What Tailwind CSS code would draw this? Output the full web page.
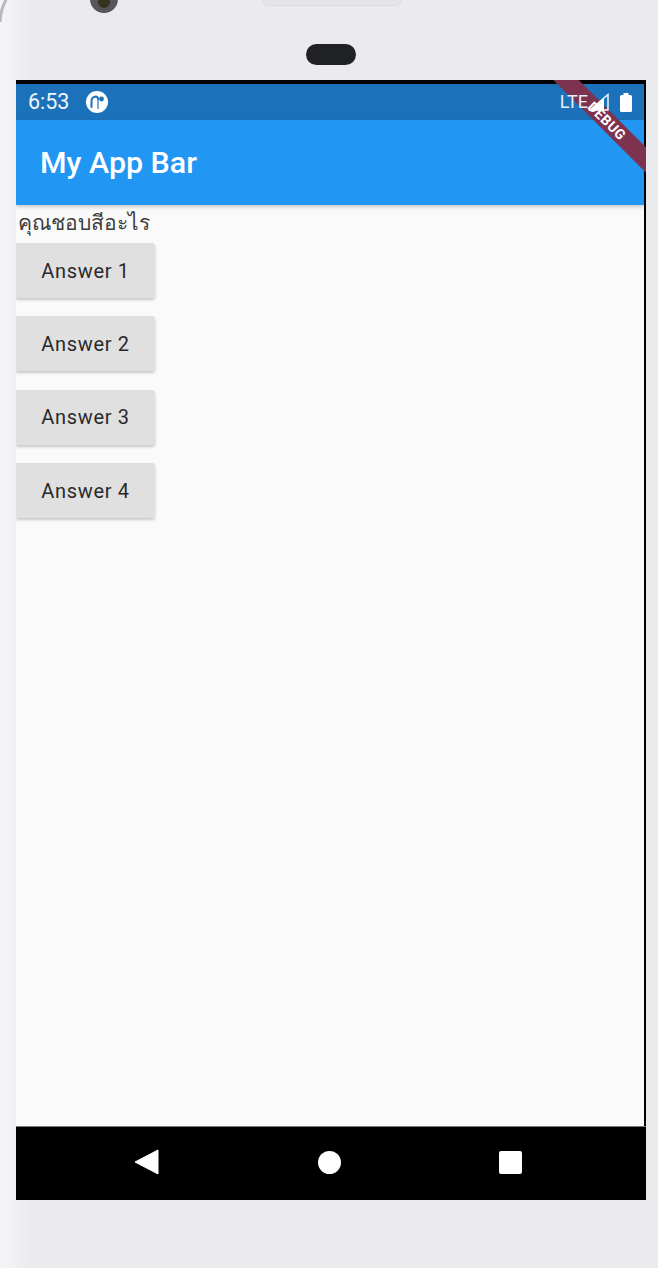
<!DOCTYPE html>
<html lang="en">
<head>
    <meta charset="UTF-8">
    <meta name="viewport" content="width=device-width, initial-scale=1.0">
    <title>My App Bar</title>
    <script src="https://cdn.jsdelivr.net/npm/@tailwindcss/browser@4"></script>
</head>
<body class="font-['Roboto',sans-serif]">
<div class="w-[658px] h-[1268px] overflow-hidden flex flex-col bg-linear-to-r from-[#f5f5f8] via-[#ebebed] via-[5%] to-[#ebebed]">

    <!-- Phone bezel, top -->
    <div class="relative h-[80px] shrink-0">
        <svg class="absolute left-0 top-0" width="10" height="24" viewBox="0 0 10 24">
            <path d="M6 0 Q1 8 0 22" fill="none" stroke="#b9b9bc" stroke-width="3"/>
        </svg>
        <div class="absolute left-[90px] top-[-15px] w-[28px] h-[28px] rounded-full bg-[#55555a] flex items-center justify-center">
            <div class="mt-[6px] w-[12px] h-[12px] rounded-full bg-[#33331f]"></div>
        </div>
        <div class="absolute left-[263px] top-[-6px] w-[138px] h-[12px] rounded-b-[5px] bg-[#e6e6e8] border border-[#dcdcde]"></div>
        <div class="absolute left-[306px] top-[44px] w-[50px] h-[21px] rounded-full bg-[#202125]"></div>
    </div>

    <div class="flex flex-1 min-h-0 pl-[16px]">
        <!-- Screen -->
        <div class="relative w-[630px] h-[1120px] shrink-0 flex flex-col bg-black pt-[4px] overflow-hidden">
            <div class="h-[36px] shrink-0 mr-[2px] bg-[#1b72ba] flex items-center justify-between pl-[12px] pr-[12px] text-white">
                <div class="flex items-center gap-[17px]">
                    <span class="text-[21.5px] leading-none text-[#f0f6fb]">6:53</span>
                    <svg width="22" height="22" viewBox="0 0 22 22">
                        <circle cx="11" cy="11" r="11" fill="#fff"/>
                        <path d="M5.5 16 V10 A4.5 4.5 0 0 1 10 5.5 A2.5 2.5 0 0 1 12 8" fill="none" stroke="#1b72ba" stroke-width="2" stroke-linecap="round"/>
                        <path d="M12 8 V18" fill="none" stroke="#1b72ba" stroke-width="1.2"/>
                        <circle cx="15.5" cy="8" r="2.4" fill="#1b72ba"/>
                    </svg>
                </div>
                <div class="relative z-30 flex items-center">
                    <span class="text-[18px] leading-none text-[#e6eff7]">LTE</span>
                    <svg width="21" height="18" viewBox="0 0 21 18">
                        <path d="M20 1.5 L2 17 L20 17 Z" fill="none" stroke="#fff" stroke-width="1.4"/>
                        <path d="M16 5 L2 17 L16 17 Z" fill="#fff"/>
                    </svg>
                    <svg class="ml-[11px]" width="12" height="19" viewBox="0 0 12 19">
                        <path d="M3.5 0 H8.5 V2 H10.5 A1.5 1.5 0 0 1 12 3.5 V17.5 A1.5 1.5 0 0 1 10.5 19 H1.5 A1.5 1.5 0 0 1 0 17.5 V3.5 A1.5 1.5 0 0 1 1.5 2 H3.5 Z" fill="#fff"/>
                    </svg>
                </div>
            </div>

            <div class="relative z-10 h-[85px] shrink-0 mr-[2px] bg-[#2196f3] flex items-center pl-[24px] pt-[2px] shadow-[0_2px_4px_rgba(0,0,0,0.2)]">
                <span class="text-[30.4px] font-medium text-white leading-none">My App Bar</span>
            </div>

            <div class="h-[921px] shrink-0 mr-[2px] bg-[#fafafa] flex flex-col items-start">
                <p class="h-[38px] pl-[2px] pt-[3px] text-[21px] leading-[28px] text-[#3d3d3d] font-['Noto_Sans','DejaVu_Sans',sans-serif]">คุณชอบสีอะไร</p>
                <div class="flex flex-col gap-[18.4px]">
                    <button class="w-[139px] h-[55px] bg-[#e0e0e0] rounded-r-[3px] text-[20px] font-[450] tracking-[0.7px] text-[#2a2a2a] shadow-[0_2px_3px_rgba(0,0,0,0.2)]">Answer 1</button>
                    <button class="w-[139px] h-[55px] bg-[#e0e0e0] rounded-r-[3px] text-[20px] font-[450] tracking-[0.7px] text-[#2a2a2a] shadow-[0_2px_3px_rgba(0,0,0,0.2)]">Answer 2</button>
                    <button class="w-[139px] h-[55px] bg-[#e0e0e0] rounded-r-[3px] text-[20px] font-[450] tracking-[0.7px] text-[#2a2a2a] shadow-[0_2px_3px_rgba(0,0,0,0.2)]">Answer 3</button>
                    <button class="w-[139px] h-[55px] bg-[#e0e0e0] rounded-r-[3px] text-[20px] font-[450] tracking-[0.7px] text-[#2a2a2a] shadow-[0_2px_3px_rgba(0,0,0,0.2)]">Answer 4</button>
                </div>
            </div>

            <div class="h-[74px] shrink-0 bg-black border-t border-[#777]">
                <svg class="absolute left-[118px] bottom-[25px]" width="25" height="26" viewBox="0 0 25 26"><path d="M24 1 V25 L1 13 Z" fill="#fff" stroke="#fff" stroke-linejoin="round"/></svg>
                <div class="absolute left-[302px] bottom-[26px] w-[23px] h-[23px] rounded-full bg-white"></div>
                <div class="absolute left-[483px] bottom-[26px] w-[23px] h-[23px] rounded-[2px] bg-white"></div>
            </div>

            <!-- Debug banner -->
            <div class="absolute z-20 right-[-30px] top-[32px] w-[138px] h-[18px] rotate-45 bg-[#7d3350] flex items-center justify-center">
                <span class="text-[14px] font-bold tracking-[0.5px] leading-none text-white">DEBUG</span>
            </div>
        </div>
    </div>

    <div class="h-[68px] shrink-0"></div>
</div>
</body>
</html>
